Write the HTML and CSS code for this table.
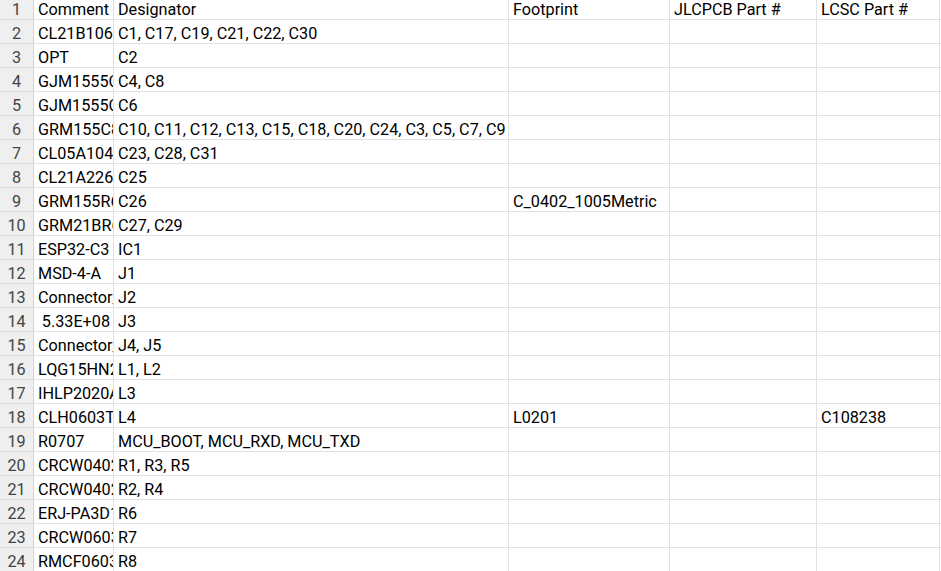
FILE: index.html
```html
<!DOCTYPE html>
<html>
<head>
<meta charset="utf-8">
<link rel="stylesheet" href="styles.css">
</head>
<body>
<div class="sheet">
  <div class="rh first">1</div><div class="c first">Comment</div><div class="c first">Designator</div><div class="c first">Footprint</div><div class="c first">JLCPCB Part #</div><div class="c first">LCSC Part #</div><div class="c first"></div>
  <div class="rh">2</div><div class="c">CL21B106K</div><div class="c">C1, C17, C19, C21, C22, C30</div><div class="c"></div><div class="c"></div><div class="c"></div><div class="c"></div>
  <div class="rh">3</div><div class="c">OPT</div><div class="c">C2</div><div class="c"></div><div class="c"></div><div class="c"></div><div class="c"></div>
  <div class="rh">4</div><div class="c">GJM1555C1</div><div class="c">C4, C8</div><div class="c"></div><div class="c"></div><div class="c"></div><div class="c"></div>
  <div class="rh">5</div><div class="c">GJM1555C1</div><div class="c">C6</div><div class="c"></div><div class="c"></div><div class="c"></div><div class="c"></div>
  <div class="rh">6</div><div class="c">GRM155C8</div><div class="c">C10, C11, C12, C13, C15, C18, C20, C24, C3, C5, C7, C9</div><div class="c"></div><div class="c"></div><div class="c"></div><div class="c"></div>
  <div class="rh">7</div><div class="c">CL05A104K</div><div class="c">C23, C28, C31</div><div class="c"></div><div class="c"></div><div class="c"></div><div class="c"></div>
  <div class="rh">8</div><div class="c">CL21A226M</div><div class="c">C25</div><div class="c"></div><div class="c"></div><div class="c"></div><div class="c"></div>
  <div class="rh">9</div><div class="c">GRM155R6</div><div class="c">C26</div><div class="c">C_0402_1005Metric</div><div class="c"></div><div class="c"></div><div class="c"></div>
  <div class="rh">10</div><div class="c">GRM21BR6</div><div class="c">C27, C29</div><div class="c"></div><div class="c"></div><div class="c"></div><div class="c"></div>
  <div class="rh">11</div><div class="c">ESP32-C3</div><div class="c">IC1</div><div class="c"></div><div class="c"></div><div class="c"></div><div class="c"></div>
  <div class="rh">12</div><div class="c">MSD-4-A</div><div class="c">J1</div><div class="c"></div><div class="c"></div><div class="c"></div><div class="c"></div>
  <div class="rh">13</div><div class="c">Connector_</div><div class="c">J2</div><div class="c"></div><div class="c"></div><div class="c"></div><div class="c"></div>
  <div class="rh">14</div><div class="c num">5.33E+08</div><div class="c">J3</div><div class="c"></div><div class="c"></div><div class="c"></div><div class="c"></div>
  <div class="rh">15</div><div class="c">Connector_</div><div class="c">J4, J5</div><div class="c"></div><div class="c"></div><div class="c"></div><div class="c"></div>
  <div class="rh">16</div><div class="c">LQG15HN2</div><div class="c">L1, L2</div><div class="c"></div><div class="c"></div><div class="c"></div><div class="c"></div>
  <div class="rh">17</div><div class="c">IHLP2020A</div><div class="c">L3</div><div class="c"></div><div class="c"></div><div class="c"></div><div class="c"></div>
  <div class="rh">18</div><div class="c">CLH0603T-</div><div class="c">L4</div><div class="c">L0201</div><div class="c"></div><div class="c">C108238</div><div class="c"></div>
  <div class="rh">19</div><div class="c">R0707</div><div class="c">MCU_BOOT, MCU_RXD, MCU_TXD</div><div class="c"></div><div class="c"></div><div class="c"></div><div class="c"></div>
  <div class="rh">20</div><div class="c">CRCW0402</div><div class="c">R1, R3, R5</div><div class="c"></div><div class="c"></div><div class="c"></div><div class="c"></div>
  <div class="rh">21</div><div class="c">CRCW0402</div><div class="c">R2, R4</div><div class="c"></div><div class="c"></div><div class="c"></div><div class="c"></div>
  <div class="rh">22</div><div class="c">ERJ-PA3D1</div><div class="c">R6</div><div class="c"></div><div class="c"></div><div class="c"></div><div class="c"></div>
  <div class="rh">23</div><div class="c">CRCW0603</div><div class="c">R7</div><div class="c"></div><div class="c"></div><div class="c"></div><div class="c"></div>
  <div class="rh">24</div><div class="c">RMCF0603</div><div class="c">R8</div><div class="c"></div><div class="c"></div><div class="c"></div><div class="c"></div>
  <div class="rh">25</div><div class="c"></div><div class="c"></div><div class="c"></div><div class="c"></div><div class="c"></div><div class="c"></div>
</div>
</body>
</html>
```
FILE: styles.css
```css
html, body {
  margin: 0;
  padding: 0;
  background: #ffffff;
  overflow: hidden;
}
.sheet {
  display: grid;
  grid-template-columns: 34px 80px 395px 161px 147px 123px 1fr;
  grid-template-rows: 20px;
  grid-auto-rows: 24px;
  font-family: Roboto, "Liberation Sans", Arial, sans-serif;
  font-size: 16.2px;
  color: #000;
}
.c, .rh {
  box-sizing: border-box;
  border-right: 1px solid #e1e1e1;
  border-bottom: 1px solid #e1e1e1;
  line-height: 17px;
  padding: 5px 3px 0 4px;
  white-space: nowrap;
  overflow: hidden;
}
.rh {
  background: #efefef;
  color: #444;
  text-align: center;
  padding-left: 0;
  padding-right: 0;
  border-right-color: #d4d4d4;
  border-bottom-color: #dadada;
}
.first {
  padding-top: 1px;
}
.num {
  text-align: right;
}
```
